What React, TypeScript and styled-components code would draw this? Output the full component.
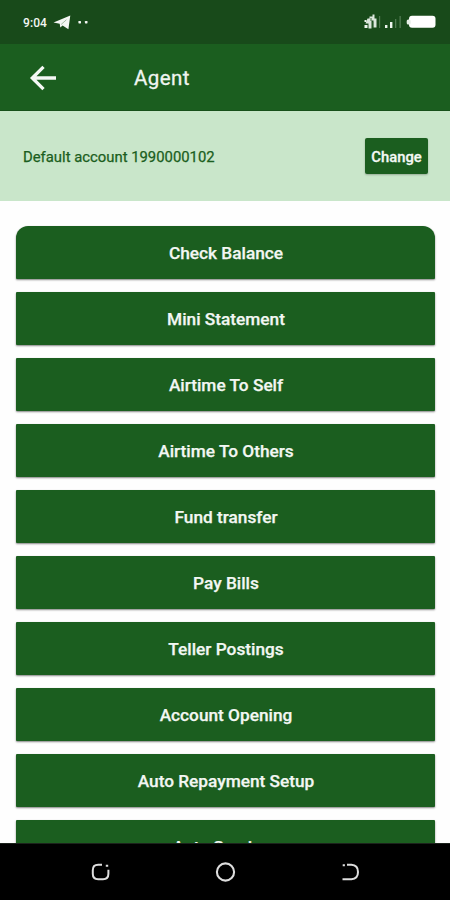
import React from 'react';
import styled, { createGlobalStyle } from 'styled-components';

const GlobalStyle = createGlobalStyle`
  * { box-sizing: border-box; }
  body { margin: 0; background: #fff; font-family: Roboto, "Liberation Sans", sans-serif; }
`;

const Screen = styled.div`
  width: 450px;
  height: 900px;
  display: flex;
  flex-direction: column;
  overflow: hidden;
  background: #fefefe;
`;

const StatusBar = styled.header`
  flex: 0 0 44px;
  display: flex;
  align-items: center;
  justify-content: space-between;
  padding: 0 14px 0 23px;
  background: #184a1a;
  color: #f2f6f2;
`;

const StatusGroup = styled.div`
  display: flex;
  align-items: center;
`;

const Clock = styled.span`
  width: 30px;
  font-size: 12px;
  font-weight: 500;
  line-height: 16px;
  letter-spacing: 0.1px;
  padding-top: 1px;
`;

const AppBar = styled.div`
  flex: 0 0 67px;
  display: flex;
  align-items: center;
  padding: 2px 0 0 29px;
  background: #1b5e1f;
  border-bottom: 1px solid #17501a;
`;

const BackButton = styled.button`
  display: flex;
  width: 105px;
  padding: 0;
  border: 0;
  background: none;
`;

const Title = styled.h1`
  margin: 0;
  color: #f0f5f0;
  font-size: 20.5px;
  font-weight: 400;
  line-height: 28px;
  letter-spacing: 0.4px;
  -webkit-text-stroke: 0.3px currentColor;
`;

const AccountStrip = styled.section`
  flex: 0 0 90px;
  display: flex;
  align-items: center;
  justify-content: space-between;
  padding: 0 22px 0 23px;
  background: #c9e6ca;
`;

const AccountLabel = styled.span`
  color: #1b5e20;
  font-size: 14.85px;
  line-height: 20px;
  -webkit-text-stroke: 0.25px currentColor;
  padding-top: 2px;
`;

const ChangeButton = styled.button`
  width: 63px;
  height: 36px;
  padding: 2px 0 0;
  border: 0;
  border-radius: 2px;
  background: #1b5e1f;
  color: #f4f8f4;
  font: 500 14.8px Roboto, sans-serif;
  -webkit-text-stroke: 0.3px currentColor;
  box-shadow: 0 1px 2px rgba(0, 0, 0, 0.25);
`;

const Menu = styled.main`
  flex: 1;
  min-height: 0;
  overflow: hidden;
  display: flex;
  flex-direction: column;
  gap: 13px;
  padding: 25px 15px 0 16px;
`;

const MenuButton = styled.button<{ $first?: boolean }>`
  flex: 0 0 53px;
  padding: 1px 0 0 1px;
  border: 0;
  border-radius: ${({ $first }) => ($first ? '12px 12px 1px 1px' : '1px')};
  background: #1b5e1f;
  color: #f3f7f3;
  font: 500 17.25px Roboto, sans-serif;
  -webkit-text-stroke: 0.25px currentColor;
  box-shadow: 0 1px 2px rgba(0, 0, 0, 0.48);
`;

const NavBar = styled.nav`
  flex: 0 0 57px;
  display: flex;
  align-items: center;
  justify-content: space-between;
  padding: 0 88px 1px;
  background: #000;
  border-top: 1px solid #1c221c;
`;

const Icon = styled.svg`
  display: block;
  overflow: visible;
`;

const items = [
  'Check Balance',
  'Mini Statement',
  'Airtime To Self',
  'Airtime To Others',
  'Fund transfer',
  'Pay Bills',
  'Teller Postings',
  'Account Opening',
  'Auto Repayment Setup',
  'Auto Services',
];

export default function App() {
  return (
    <>
      <GlobalStyle />
      <Screen>
        <StatusBar>
          <StatusGroup>
            <Clock>9:04</Clock>
            <Icon width="38" height="16" viewBox="0 0 38 16" fill="#f4f7f4">
              <path d="M0.5 8.6 17.3 1.5 15.4 15.3 9.6 11.4 7.3 13.5 6.7 9.8Z" />
              <path d="M8.2 10.4 13.4 5.8" stroke="#6f9370" strokeWidth="0.6" />
              <rect x="25.4" y="7" width="2.6" height="2.4" rx="0.6" />
              <rect x="31.9" y="7" width="2.6" height="2.4" rx="0.6" />
            </Icon>
          </StatusGroup>
          <Icon width="72" height="16" viewBox="364 14 72 16" fill="#eef4ee">
            <path d="M367.5 18.5h2v-2h3v-2h2v4h2v9h-3v-7h-2v8h-3v-5h-3Z" opacity="0.92" />
            <path d="M364.5 20h2v2h-2zM364.5 25h3v3h-3z" />
            <path d="M371 18v3M372.7 22v6" stroke="#285a2a" strokeWidth="0.9" />
            <rect x="379" y="16" width="1.2" height="12" fill="#4d764e" />
            <rect x="385" y="25" width="2.4" height="3" />
            <rect x="390" y="22" width="2.4" height="6" />
            <rect x="395" y="19" width="1.3" height="9" fill="#507a51" />
            <rect x="399.5" y="16" width="1.3" height="12" fill="#507a51" />
            <rect x="409" y="15.7" width="26.5" height="12" rx="3" fill="#fff" />
            <rect x="406.7" y="19.5" width="4" height="5" rx="1.5" fill="#e6eee6" />
          </Icon>
        </StatusBar>
        <AppBar>
          <BackButton aria-label="Back">
            <Icon width="28" height="26" viewBox="0 0 28 26" fill="none" stroke="#f5f8f5" strokeWidth="3.3">
              <path d="M27 13H3.5M14.5 1.8 3.3 13l11.2 11.2" />
            </Icon>
          </BackButton>
          <Title>Agent</Title>
        </AppBar>
        <AccountStrip>
          <AccountLabel>Default account 1990000102</AccountLabel>
          <ChangeButton>Change</ChangeButton>
        </AccountStrip>
        <Menu>
          {items.map((item, i) => (
            <MenuButton key={item} $first={i === 0}>{item}</MenuButton>
          ))}
        </Menu>
        <NavBar>
          <Icon width="24" height="24" viewBox="88 860 24 24" fill="none" stroke="#dedede" strokeWidth="2">
            <path d="M102 864.8h-3.8q-5.4 0-5.4 5.4v3.6q0 5.4 5.4 5.4h4.8q5.4 0 5.4-5.4v-4M105.8 865.8h2.4" />
          </Icon>
          <Icon width="24" height="24" viewBox="0 0 24 24" fill="none" stroke="#dedede" strokeWidth="2.1">
            <circle cx="12.5" cy="12" r="8.6" />
          </Icon>
          <Icon width="24" height="24" viewBox="338 860 24 24" fill="none" stroke="#dedede" strokeWidth="2">
            <path d="M347 864.8h4.4q6.6.3 6.6 7.2t-6.6 7.2H342.5M342.7 865.2h2.2" />
          </Icon>
        </NavBar>
      </Screen>
    </>
  );
}
